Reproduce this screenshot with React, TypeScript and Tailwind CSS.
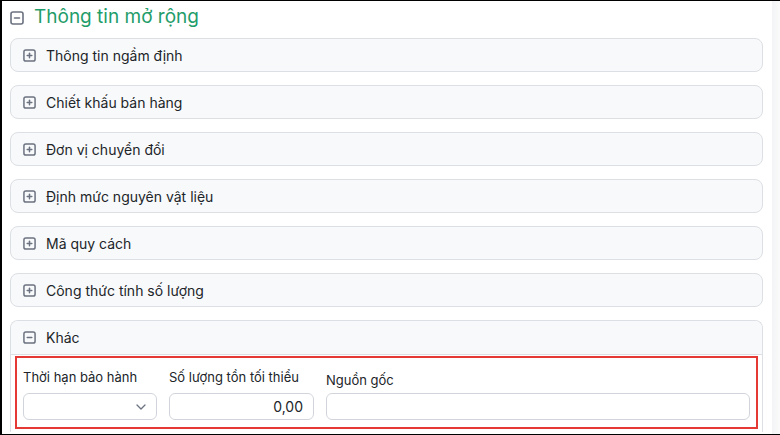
import { useState } from "react";

type BoxIconProps = { open: boolean; size?: number };

// small square toggle used by the collapsible sections
function BoxIcon({ open, size = 13 }: BoxIconProps) {
  return (
    <svg width={size} height={size} viewBox="0 0 14 14" fill="none" className="shrink-0">
      <rect x="1" y="1" width="12" height="12" rx="2" stroke="#6b7280" strokeWidth="1.6" />
      <path d="M4.5 7h5" stroke="#6b7280" strokeWidth="1.6" strokeLinecap="round" />
      {!open && <path d="M7 4.5v5" stroke="#6b7280" strokeWidth="1.6" strokeLinecap="round" />}
    </svg>
  );
}

const sections = [
  "Thông tin ngầm định",
  "Chiết khấu bán hàng",
  "Đơn vị chuyển đổi",
  "Định mức nguyên vật liệu",
  "Mã quy cách",
  "Công thức tính số lượng",
];

function App() {
  const [qty, setQty] = useState("0,00");
  const [origin, setOrigin] = useState("");

  return (
    <div
      className="w-[780px] h-[435px] flex overflow-hidden bg-white border-l-2 border-t border-b border-black"
      style={{ fontFamily: "Inter, 'Noto Sans', sans-serif" }}
    >
      <div className="flex-1 pl-[8px] pr-[9px]">
        <div className="flex items-center gap-[10px] h-[30px] pt-[3px]">
          <BoxIcon open size={14} />
          <span className="text-[19px] text-[#1f9d6a]">Thông tin mở rộng</span>
        </div>

        <div className="flex flex-col gap-[13px] mt-[7px]">
          {sections.map((s) => (
            <div
              key={s}
              className="h-[34px] flex items-center gap-[10px] pl-[12px] rounded-[8px] border border-[#dcdfe3] bg-[#f8f9fa]"
            >
              <BoxIcon open={false} size={13} />
              <span className="text-[14px] text-[#212529]">{s}</span>
            </div>
          ))}

          <div className="rounded-t-[8px] border border-[#dcdfe3] border-b-0 overflow-hidden">
            <div className="h-[34px] flex items-center gap-[10px] pl-[12px] bg-[#f8f9fa] border-b border-[#dcdfe3]">
              <BoxIcon open size={13} />
              <span className="text-[14px] text-[#212529]">Khác</span>
            </div>
            <div className="px-[4px] pt-[1px] pb-[3px]">
              <div className="border-2 border-[#e53935] flex gap-[12px] px-[6px] pt-[11px] pb-[7px]">
                <div className="w-[134px] flex flex-col gap-[7px]">
                  <label className="text-[13px] text-[#212529] leading-[17px]">Thời hạn bảo hành</label>
                  <div className="h-[27px] rounded-[6px] border border-[#d1d5db] flex items-center justify-end pr-[10px]">
                    <svg width="10" height="6" viewBox="0 0 10 6" fill="none">
                      <path d="M1 1l4 4 4-4" stroke="#6b7280" strokeWidth="1.3" strokeLinecap="round" strokeLinejoin="round" />
                    </svg>
                  </div>
                </div>
                <div className="w-[145px] flex flex-col gap-[7px]">
                  <label className="text-[13px] text-[#212529] leading-[17px]">Số lượng tồn tối thiểu</label>
                  <input
                    value={qty}
                    onChange={(e) => setQty(e.target.value)}
                    className="h-[27px] rounded-[6px] border border-[#d1d5db] px-[10px] text-right text-[14px] text-[#212529] outline-none"
                  />
                </div>
                <div className="flex-1 flex flex-col gap-[7px]">
                  <label className="text-[13px] text-[#212529] leading-[17px] mt-[3px] -mb-[3px]">Nguồn gốc</label>
                  <input
                    value={origin}
                    onChange={(e) => setOrigin(e.target.value)}
                    className="h-[27px] rounded-[6px] border border-[#d1d5db] px-[10px] text-[14px] outline-none"
                  />
                </div>
              </div>
            </div>
          </div>
        </div>
      </div>
      <div className="w-[8px] bg-gradient-to-r from-[#f3f4f6] to-[#fafafa]" />
    </div>
  );
}

export default App;
